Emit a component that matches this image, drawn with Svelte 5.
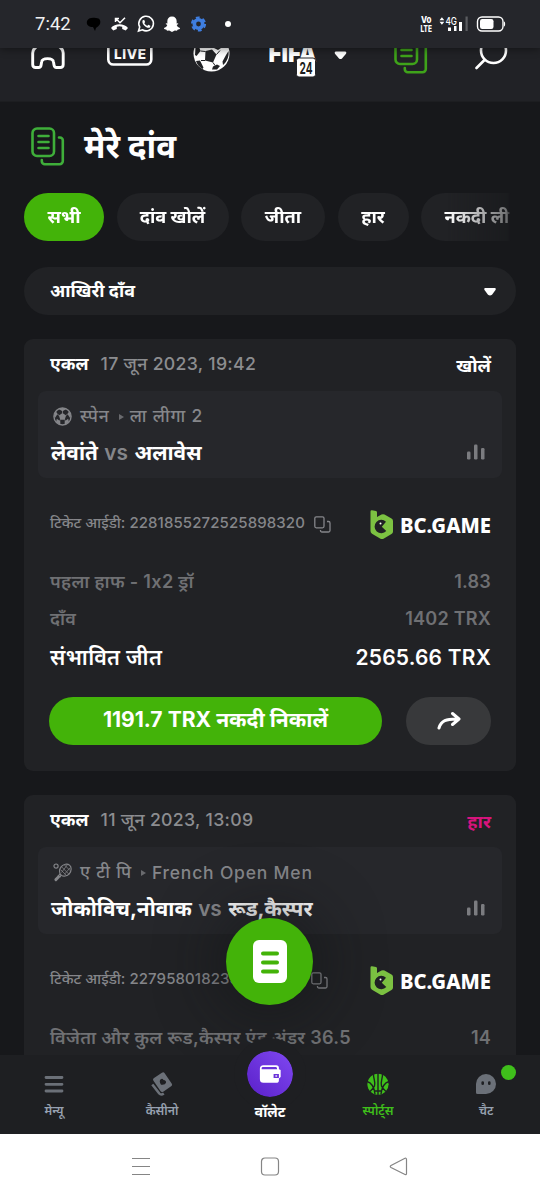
<script>
    const filters = [
        { label: 'सभी', size: 'w80' },
        { label: 'दांव खोलें', size: 'w112' },
        { label: 'जीता', size: 'w84' },
        { label: 'हार', size: 'w71' },
        { label: 'नकदी ली', size: 'w112' }
    ];
    let active = $state(0);

    const bets = [
        {
            date: '17 जून 2023, 19:42',
            status: 'खोलें',
            lost: false,
            sport: 'football',
            region: 'स्पेन',
            league: 'ला लीगा 2',
            home: 'लेवांते',
            away: 'अलावेस',
            ticket: '2281855272525898320',
            market: 'पहला हाफ - 1x2 ड्रॉ',
            odds: '1.83',
            stake: '1402 TRX',
            win: '2565.66 TRX',
            cashout: '1191.7 TRX नकदी निकालें'
        },
        {
            date: '11 जून 2023, 13:09',
            status: 'हार',
            lost: true,
            sport: 'tennis',
            region: 'ए टी पि',
            league: 'French Open Men',
            home: 'जोकोविच,नोवाक',
            away: 'रूड,कैस्पर',
            ticket: '2279580182392176640',
            market: 'विजेता और कुल रूड,कैस्पर एंड अंडर 36.5',
            odds: '14'
        }
    ];
</script>

{#snippet slips()}
    <g fill="none" stroke="currentColor" stroke-width="2.6" stroke-linecap="round" stroke-linejoin="round">
        <rect x="1.5" y="1.5" width="21.5" height="27.5" rx="4.5" />
        <path d="M7.5 9h10M7.5 15h10M7.5 21h10" />
        <path d="M28 10.5h1a2.8 2.8 0 0 1 2.8 2.8V34a3.2 3.2 0 0 1-3.2 3.2H13.800a3 3 0 0 1-3-3V33" />
    </g>
{/snippet}

{#snippet ball()}
    <circle cx="10" cy="10" r="9" fill="none" stroke="currentColor" stroke-width="1.5" />
    <path fill="currentColor" d="M10 6.200l3.800 2.700-1.500 4.400H7.700L6.200 8.900zM5.800 2.200L10 1l4.200 1.200L10 4.600zM1 9.500l1.800-5.200 2 3.100-2.600 4zM19 9.500l-1.800-5.200-2 3.100 2.600 4zM3.200 16l.8-3.600 3.700 2.500v3.800zM16.800 16l-.8-3.600-3.700 2.500v3.800z" />
    <path fill="none" stroke="currentColor" stroke-width=".8" d="M10 4v3M4.500 7.500l2 1.400M15.500 7.500l-2 1.400M7.800 13l-1 2M12.200 13l1 2" />
{/snippet}

<div class="phone">
    <div class="status-bar">
        <span class="time">7:42</span>
        <svg class="status-icons" viewBox="84 12 150 24" width="150" height="24">
            <path fill="#000" d="M87 21c1-3 5-4 9-3 4 0 5 3 4 6-1 2-3 3-4 4l-1 3-2-4c-4 0-7-2-6-6z" />
            <path fill="#fff" d="M111 28c4-5 13-5 17 0l-2.300 2.500-3.500-1.600v-2.100q-2.700-1-5.400 0v2.100l-3.500 1.600z" />
            <path fill="none" stroke="#fff" stroke-width="1.500" d="M115.500 22v-3.500h3.500M116 18.700l4 4 5-5" />
            <path fill="none" stroke="#fff" stroke-width="1.600" d="M138.500 31l1.200-4a7.300 7.300 0 1 1 2.700 2.800z" />
            <path fill="#fff" d="M142.500 20.500l1.600-.7 1 2.300-.8 1.200c.8 1.300 1.600 2 2.900 2.600l1-1.200 2.200 1-.3 1.600c-2 2-8.700-2.200-7.600-6.800z" />
            <path fill="#fff" d="M172 16.500c3 0 4.800 2 4.700 5l-.1 2 1.400-.2.3.8-1.600 1c.7 1.700 1.800 2.600 3.300 3l-.2 1-2.300.6-.5 1-2.200-.1-2.800 1.400-2.800-1.400-2.200.1-.5-1-2.300-.6-.2-1c1.500-.4 2.600-1.300 3.300-3l-1.600-1 .3-.8 1.400.2-.1-2c-.1-3 1.700-5 4.700-5z" />
            <g stroke="#3f7ee0" fill="none">
                <circle cx="198.500" cy="24" r="4.200" stroke-width="3.600" />
                <circle cx="198.500" cy="24" r="6.500" stroke-width="2.200" stroke-dasharray="3.800 3" />
            </g>
            <circle cx="228" cy="24" r="3" fill="#fff" />
        </svg>
        <svg class="system" viewBox="418 12 92 24" width="92" height="24" fill="#fff">
            <text x="421" y="23.300" font-size="9.500" font-weight="800" textLength="10.500" lengthAdjust="spacingAndGlyphs">Vo</text>
            <text x="420.500" y="31.600" font-size="9.500" font-weight="800" textLength="11.500" lengthAdjust="spacingAndGlyphs">LTE</text>
            <path d="M439.500 20.300l2.400-3 2.400 3zM439.500 21.800l2.400 3 2.400-3z" />
            <text x="445.500" y="24.800" font-size="10.500" font-weight="500" textLength="11.500" lengthAdjust="spacingAndGlyphs">4G</text>
            <path d="M448 27.500h3V31h-3zM454 26h2.500v5H454zM459 22h3v9h-3z" />
            <path fill="#5b5c60" d="M465.500 16.500h2.200V31h-2.200z" />
            <rect x="477.500" y="17" width="25.500" height="14" rx="4.500" fill="none" stroke="#fff" stroke-width="1.400" />
            <rect x="480" y="19" width="13.500" height="10" rx="2.200" />
            <path d="M504 21.500c1.500 0 1.500 5 0 5z" />
        </svg>
    </div>

    <div class="top-nav">
        <svg viewBox="31 48 36 32" width="36" height="32">
            <path fill="none" stroke="#fff" stroke-width="2.900" stroke-linejoin="round" d="M48 38l-12.500 9.500a7 7 0 0 0-2.800 5.500v11.500q0 3 3 3h3q2 0 2.400-2.500l.5-3c.6-4.500 11.300-4.500 11.900 0l.5 3q.4 2.500 2.400 2.500h3.800q3 0 3-3V53a7 7 0 0 0-2.800-5.500z" />
        </svg>
        <svg viewBox="107 48 46 32" width="46" height="32">
            <rect x="108.300" y="36" width="43" height="28.500" rx="5" fill="none" stroke="#fff" stroke-width="2.600" />
            <text x="114" y="59.200" fill="#fff" font-size="13.500" font-weight="800" textLength="32" lengthAdjust="spacing">LIVE</text>
        </svg>
        <svg viewBox="192 48 38 32" width="38" height="32">
            <circle cx="211.500" cy="53.500" r="18" fill="#fff" />
            <path fill="#222326" d="M205.500 51l6.500-1.500 4.500 5-3.500 8-8-2zM195.500 48h4l1 3-4 5-1.500-1zM196 61l4-.5 3.500 7-1 1.500c-3-1.500-5.500-4.500-6.500-8zM213 66.500l4-2 3 1.500-3 3.500h-5zM226 55l2.500-4c.8 5-1.500 11-5.500 14l-.5-3.500zM214 48h7l-3 2z" />
            <path fill="none" stroke="#222326" stroke-width="1" d="M200.500 51l5 .5M201 60.500l4 0M213 62.500l2 3M216.500 54.500l3.500-4" />
        </svg>
        <svg viewBox="269 48 48 32" width="48" height="32">
            <text x="268.500" y="62.300" fill="#fff" font-size="25" font-weight="900" textLength="48" lengthAdjust="spacingAndGlyphs">FIFA</text>
            <rect x="296.500" y="58" width="19" height="19" rx="2.500" fill="#fff" stroke="#222326" />
            <text x="299.500" y="73.500" fill="#1c1d20" font-size="16.500" font-weight="700" textLength="13" lengthAdjust="spacingAndGlyphs">24</text>
        </svg>
        <svg viewBox="334 48 14 32" width="14" height="32">
            <path fill="#fff" d="M335.500 51.500h10q1.500 1 .5 2.200l-4 4.800q-1.500 1.200-3 0l-4-4.800q-1-1.200.5-2.200z" />
        </svg>
        <svg class="green" viewBox="0 13 34 32" width="34" height="32">{@render slips()}</svg>
        <svg viewBox="475 48 34 32" width="34" height="32">
            <g fill="none" stroke="#fff" stroke-width="2.600" stroke-linecap="round">
                <circle cx="493.500" cy="50.500" r="12.500" />
                <path d="M484.500 60l-8 8" />
            </g>
        </svg>
    </div>

    <main>
        <h1>
            <svg class="slips" viewBox="0 0 34 39" width="34" height="39">{@render slips()}</svg>
            <span>मेरे दांव</span>
        </h1>

        <div class="filters">
            {#each filters as filter, i}
                <button class="chip {filter.size}" class:active={active === i} onclick={() => (active = i)}>{filter.label}</button>
            {/each}
        </div>

        <div class="select">
            <span>आखिरी दाँव</span>
            <svg viewBox="0 0 14 10" width="14" height="10">
                <path fill="#fff" d="M2 1h10q1.500.5.500 2L9 7.700q-2 1.500-4 0L1.500 3q-1-1.500.5-2z" />
            </svg>
        </div>

        {#each bets as bet}
            <section class="card">
                <header>
                    <b>एकल</b>
                    <time>{bet.date}</time>
                    <span class="status" class:lost={bet.lost}>{bet.status}</span>
                </header>

                <div class="event">
                    <div class="league">
                        {#if bet.sport === 'football'}
                            <svg viewBox="0 0 20 20" width="19" height="19">{@render ball()}</svg>
                        {:else}
                            <svg viewBox="0 0 20 20" width="19" height="19" fill="none" stroke="currentColor" stroke-width="1.200">
                                <circle cx="3.200" cy="3.200" r="2.200" />
                                <ellipse cx="13" cy="7.500" rx="5.600" ry="6.800" transform="rotate(40 13 7.500)" />
                                <path stroke-width=".8" d="M9 4l8 8M12 2l6 6M8 7l6 6M9 10l6-8M12 12l6-7" />
                                <path d="M8.500 12.500l-1 2.500M7.500 11.500L5 14" />
                                <path stroke-width="3" stroke-linecap="round" d="M6 14.500L3 17.500" />
                            </svg>
                        {/if}
                        <span>{bet.region}</span>
                        <i></i>
                        <span>{bet.league}</span>
                    </div>
                    <div class="teams">
                        <p>{bet.home} <em>vs</em> {bet.away}</p>
                        <svg viewBox="0 0 18 17" width="18" height="17" fill="#7b7c80">
                            <rect x="0" y="7.500" width="3.500" height="8" rx="1.200" />
                            <rect x="7" y=".5" width="3.500" height="15" rx="1.200" />
                            <rect x="14" y="4" width="3.500" height="11.500" rx="1.200" />
                        </svg>
                    </div>
                </div>

                <div class="ticket">
                    <span>टिकेट आईडी: <span class="id">{bet.ticket}</span></span>
                    <svg class="copy" viewBox="0 0 17 17" width="17" height="17" fill="none" stroke="currentColor" stroke-width="1.300">
                        <rect x=".8" y=".8" width="9.200" height="11" rx="1.500" />
                        <path d="M13 5.500h1.500q1.500 0 1.500 1.500v7.500q0 1.500-1.500 1.500H8q-1.500 0-1.500-1.500V14" />
                    </svg>
                    <svg class="brand" viewBox="0 0 121 30" width="121" height="30">
                        <path fill="#7cc242" d="M.5 1.500Q.5 0 2 .2l4 .9q1 .3 1 1.400V7l4.500-2.500q1.500-.7 3 0l7 4q1.500.8 1.500 2.500v10.500q0 1.700-1.500 2.600l-8 4.600q-1.500.8-3 0l-8.500-5Q.5 22.800.5 21z" />
                        <path fill="#202124" d="M16 11.800l-4.200 4.900 4.500 4.300A6.700 6.700 0 1 1 16 11.800z" />
                        <circle cx="10.500" cy="13.500" r="1" fill="#fff" />
                        <text class="wordmark" x="30" y="23.300" fill="#fff" textLength="91" lengthAdjust="spacingAndGlyphs">BC.GAME</text>
                    </svg>
                </div>

                <dl>
                    <div><dt>{bet.market}</dt><dd>{bet.odds}</dd></div>
                    {#if bet.stake}
                        <div><dt>दाँव</dt><dd>{bet.stake}</dd></div>
                        <div class="win"><dt>संभावित जीत</dt><dd>{bet.win}</dd></div>
                    {/if}
                </dl>

                {#if bet.cashout}
                    <div class="actions">
                        <button class="cashout">{bet.cashout}</button>
                        <button class="share" aria-label="share">
                            <svg viewBox="0 0 24 20" width="24" height="20" fill="none" stroke="#fff" stroke-width="3" stroke-linecap="round" stroke-linejoin="round">
                                <path d="M2 17C4 10 9 7.500 21.500 8M15.500 2.500l6.500 5.500-6.500 5.500" />
                            </svg>
                        </button>
                    </div>
                {/if}
            </section>
        {/each}
    </main>

    <div class="fab">
        <svg viewBox="0 0 34 43" width="34" height="43">
            <rect width="34" height="43" rx="6" fill="#fff" />
            <path stroke="#43b309" stroke-width="4" stroke-linecap="round" d="M10 13.500h14M10 22.500h14M10 31.500h14" />
        </svg>
    </div>

    <nav>
        <a href="#menu">
            <svg viewBox="0 0 24 24" width="24" height="24" stroke="#6b7078" stroke-width="2.800" stroke-linecap="round">
                <path d="M4 5.500h16M4 12.300h16M4 19h16" />
            </svg>
            मेन्यू
        </a>
        <a href="#casino">
            <svg viewBox="0 0 24 24" width="24" height="24">
                <rect x="6" y="2" width="13.500" height="16.500" rx="2" fill="#6b7078" transform="rotate(-34 12.500 10.500)" />
                <path fill="#1e1f22" d="M13.500 8q-1-2-2.800-.7-2 1.700.3 5.400 4.300.6 5-2 .5-2.200-2.500-2.700z" />
                <path fill="none" stroke="#6b7078" stroke-width="2.600" d="M2.300 12.500l7 9q1.800 2 4.500 0" />
            </svg>
            कैसीनो
        </a>
        <a href="#wallet" class="wallet">
            <span class="coin">
                <svg viewBox="0 0 26 22" width="23" height="20">
                    <path fill="#fff" d="M5 1h14.500q3 0 3 3v1.500l2 1v8l-2 1.500v2q0 3-3 3H5q-4 0-4-4V5q0-4 4-4z" />
                    <path fill="#6a32d8" d="M4 3.200h15q1.500 0 1.500 2.500H3Q2.500 3.500 4 3.200zM16.500 11h6v4.500h-6z" />
                    <path fill="#fff" d="M18.500 12.500h2V14h-2z" />
                </svg>
            </span>
            वॉलेट
        </a>
        <a href="#sports" class="current">
            <svg viewBox="0 0 24 24" width="24" height="24">
                <circle cx="12" cy="12.300" r="10.600" fill="#3fbf1b" />
                <path fill="none" stroke="#1e1f22" stroke-width="1.400" d="M12 1v23M7.500 1c-.5 6 2.500 9 1 13-.8 2-2.500 3.500-4.500 5.500M16.500 1c.5 6-2.500 9-1 13 .8 2 2.500 3.500 4.500 5.500M1 9.500c4 1 7 5 8 12.500M23 9.500c-4 1-7 5-8 12.500M8.500 19h7" />
            </svg>
            स्पोर्ट्स
        </a>
        <a href="#chat">
            <svg viewBox="0 0 24 24" width="24" height="24">
                <path fill="#6b7078" d="M12 2a10 10 0 1 1 0 20H3.500Q2 22 2 20.500V12A10 10 0 0 1 12 2z" />
                <path stroke="#1e1f22" stroke-width="2.600" stroke-linecap="round" d="M8.700 10.500v1.300M15.300 10.500v1.300" />
            </svg>
            चैट
            <span class="dot"></span>
        </a>
    </nav>

    <div class="system-nav">
        <svg viewBox="0 0 20 20" width="20" height="20"><path d="M1 1.500h18M1 9.500h18M1 17.500h18" /></svg>
        <svg viewBox="0 0 20 20" width="20" height="20"><rect x="1.500" y="1" width="17" height="17" rx="3.500" /></svg>
        <svg viewBox="0 0 20 20" width="20" height="20"><path d="M17.500 2.500v14q0 1.500-1.500 1L2 10.500q-1.500-1 0-2L16 1.300q1.500-.5 1.500 1.200z" /></svg>
    </div>
</div>

<style>
    :global(body) {
        background: #17181b;
    }
    .phone {
        position: relative;
        width: 540px;
        height: 1200px;
        overflow: hidden;
        display: flex;
        flex-direction: column;
        background: #17181b;
        color: #fff;
        font-family: Inter, "Noto Sans Devanagari", "Noto Sans", sans-serif;
    }
    .phone * {
        box-sizing: border-box;
    }
    svg {
        display: block;
        flex: none;
    }
    button {
        border: 0;
        padding: 0;
        color: #fff;
        font-family: inherit;
    }

    .status-bar {
        flex: none;
        height: 48px;
        padding: 0 30px 0 35px;
        display: flex;
        align-items: center;
        background: #25262b;
        box-shadow: 0 1px 8px rgba(0, 0, 0, 0.45);
        z-index: 1;
    }
    .time {
        width: 49px;
        font: 400 18.5px Roboto, sans-serif;
        color: #f1f1f2;
    }
    .system {
        margin-left: auto;
    }
    .top-nav {
        flex: none;
        height: 54px;
        padding-left: 31px;
        display: grid;
        grid-template-columns: 76px 85px 77px 65px 60px 81px 65px;
        align-items: start;
        background: #212226;
        border-bottom: 1px solid #1d1e21;
    }
    .green {
        color: #3fa31a;
    }

    main {
        height: 953px;
        flex: none;
        overflow: hidden;
        padding: 0 24px;
    }
    h1 {
        margin: 0;
        height: 91px;
        padding: 0 0 3px 7px;
        display: flex;
        align-items: center;
        gap: 19px;
        font-size: 33px;
        line-height: 40px;
        font-weight: 700;
    }
    .slips {
        color: #3fae3a;
    }
    .filters {
        display: flex;
        gap: 12.5px;
        overflow: hidden;
        -webkit-mask-image: linear-gradient(90deg, #000 86%, rgba(0, 0, 0, 0.4) 98%, transparent 99%);
        mask-image: linear-gradient(90deg, #000 86%, rgba(0, 0, 0, 0.4) 98%, transparent 99%);
    }
    .chip {
        flex: none;
        height: 48px;
        border-radius: 24px;
        background: #212225;
        font-size: 18.2px;
        font-weight: 700;
        white-space: nowrap;
    }
    .chip.active {
        background: #43b309;
    }
    .w80 {
        width: 80px;
    }
    .w112 {
        width: 112px;
    }
    .w84 {
        width: 84px;
    }
    .w71 {
        width: 71px;
    }
    .select {
        height: 48px;
        margin: 26px 0 24px;
        padding: 1px 19px 0 26px;
        border-radius: 24px;
        background: #212225;
        display: flex;
        align-items: center;
        justify-content: space-between;
        font-size: 17.9px;
        font-weight: 700;
    }

    .card {
        height: 432px;
        margin-bottom: 24px;
        border-radius: 9px;
        background: #212225;
    }
    header {
        height: 52px;
        padding: 0 25px 1px 26px;
        display: flex;
        align-items: center;
        gap: 12px;
        font-size: 17.7px;
    }
    time {
        color: #8c8d90;
        font-weight: 500;
        letter-spacing: 0.3px;
    }
    .status {
        margin-left: auto;
        padding-top: 4px;
        font-size: 18.2px;
        font-weight: 700;
    }
    .lost {
        color: #d6147c;
    }
    .event {
        height: 87px;
        margin: 0 14px;
        padding: 11px 17px 0 13px;
        border-radius: 8px;
        background: #26272b;
    }
    .league {
        height: 29px;
        padding-left: 2px;
        display: flex;
        align-items: center;
        color: #85868a;
        font-size: 17.5px;
        font-weight: 500;
        letter-spacing: 0.8px;
    }
    .league svg {
        margin-right: 8px;
    }
    .league i {
        margin: 0 6px 0 9px;
        border-left: 5px solid #696a6e;
        border-top: 3.5px solid transparent;
        border-bottom: 3.5px solid transparent;
    }
    .teams {
        height: 42px;
        display: flex;
        align-items: center;
        justify-content: space-between;
        font-size: 20.8px;
        font-weight: 700;
    }
    p {
        margin: 0;
        padding-top: 3px;
        word-spacing: 1.5px;
    }
    em {
        font-style: normal;
        font-weight: 600;
        color: #85868a;
    }
    .ticket {
        height: 85px;
        padding: 5px 25px 0 26px;
        display: flex;
        align-items: center;
        color: #85868a;
        font-size: 15px;
        font-weight: 500;
    }
    .id {
        letter-spacing: 0.1px;
    }
    .copy {
        margin: 2px 0 0 9px;
    }
    .brand {
        margin: 4px 0 0 auto;
    }
    .wordmark {
        font: 800 21.4px "Noto Sans", sans-serif;
    }
    dl {
        margin: 0;
        padding: 0 25px 0 26px;
        color: #6f7073;
        font-size: 18.1px;
        font-weight: 600;
        line-height: 37px;
        letter-spacing: 0.2px;
    }
    dl div {
        height: 37px;
        display: flex;
        align-items: baseline;
        justify-content: space-between;
    }
    dt {
        letter-spacing: 0.3px;
    }
    dd {
        margin: 0;
    }
    .win {
        height: 40px;
        line-height: 40px;
        color: #fff;
        font-size: 21px;
    }
    .win dt {
        font-size: 21.5px;
    }
    .actions {
        padding: 20px 25px 0;
        display: flex;
        justify-content: space-between;
    }
    .cashout,
    .share {
        height: 48px;
        border-radius: 24px;
    }
    .cashout {
        width: 333px;
        background: #43b309;
        font-size: 21.1px;
        font-weight: 700;
    }
    .share {
        width: 85px;
        background: #38393b;
        display: flex;
        align-items: center;
        justify-content: center;
    }

    .fab {
        position: absolute;
        left: 226px;
        top: 918px;
        width: 87px;
        height: 87px;
        border-radius: 50%;
        background: #43b309;
        box-shadow: 0 0 56px 12px rgba(18, 19, 22, 0.5);
        display: flex;
        align-items: center;
        justify-content: center;
    }

    nav {
        position: relative;
        flex: none;
        height: 79px;
        display: grid;
        grid-template-columns: repeat(5, 108px);
        background: #1e1f22;
    }
    nav a {
        position: relative;
        padding-top: 17px;
        display: flex;
        flex-direction: column;
        align-items: center;
        gap: 6px;
        color: #97a1b0;
        font-size: 12.2px;
        line-height: 18px;
        font-weight: 600;
        text-decoration: none;
    }
    nav .current {
        color: #3fbf1b;
    }
    nav .wallet {
        padding: 0;
        margin-top: -17px;
        gap: 0;
        font-size: 14.2px;
        font-weight: 700;
        color: #fff;
    }
    .coin {
        width: 72px;
        height: 72px;
        margin-bottom: -7px;
        border: 13px solid #1e1f22;
        border-radius: 50%;
        background: linear-gradient(45deg, #5a20c8, #8048f2) padding-box;
        display: flex;
        align-items: center;
        justify-content: center;
    }
    .dot {
        position: absolute;
        top: 10px;
        left: 69px;
        width: 15px;
        height: 15px;
        border-radius: 50%;
        background: #3fbf1b;
    }

    .system-nav {
        height: 66px;
        padding: 0 131px;
        display: flex;
        align-items: center;
        justify-content: space-between;
        background: #fff;
    }
    .system-nav svg {
        fill: none;
        stroke: #858585;
        stroke-width: 1.2;
    }
</style>
